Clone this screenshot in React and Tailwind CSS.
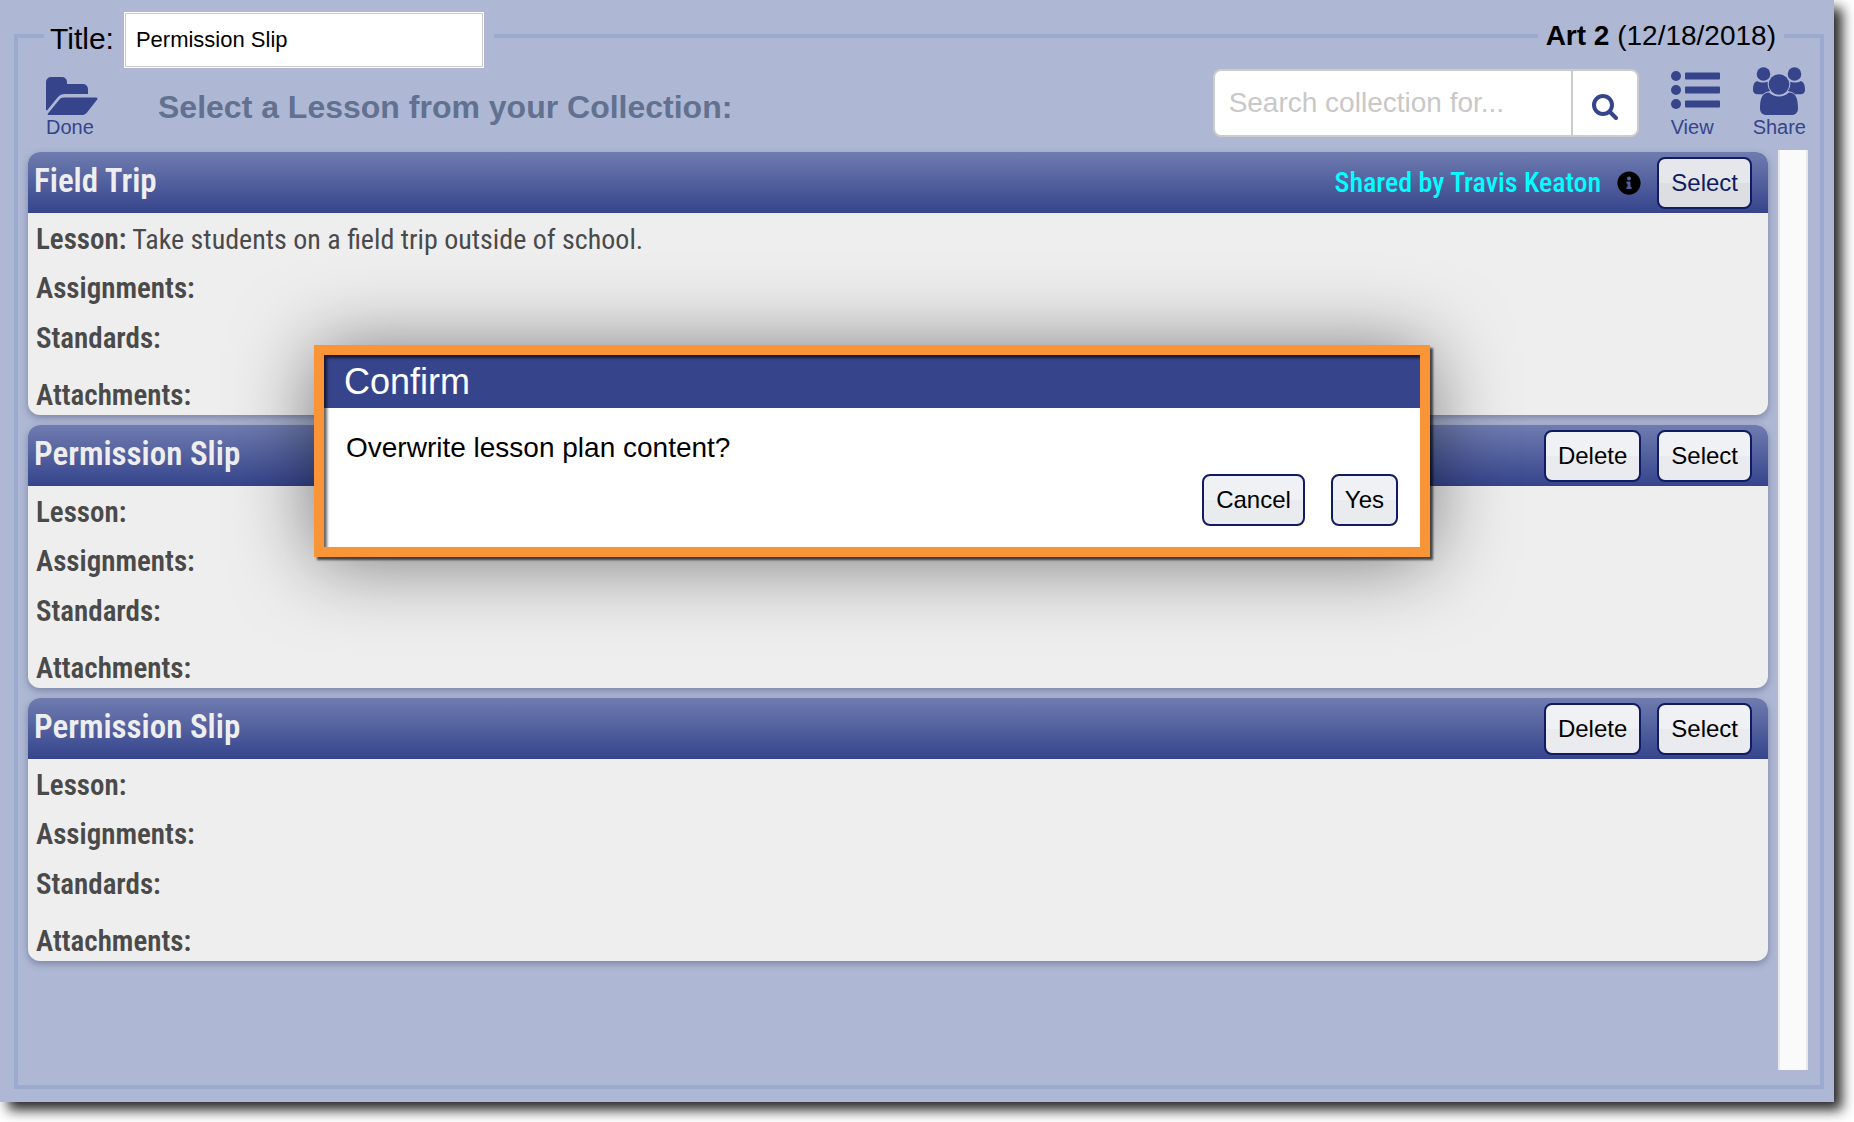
import React, { useState } from "react";
import { FaInfoCircle } from "react-icons/fa";

const lessons = [
    { id: 1, title: "Field Trip", text: "Take students on a field trip outside of school.", sharedBy: "Travis Keaton" },
    { id: 2, title: "Permission Slip", text: "" },
    { id: 3, title: "Permission Slip", text: "" },
];

function FolderOpenIcon() {
    return (
        <svg width="52" height="38" viewBox="0 0 52 38" fill="currentColor" aria-hidden="true">
            <path d="M0 33V5a5 5 0 0 1 5-5h11a5 5 0 0 1 5 5v2h16a5 5 0 0 1 5 5v5H19c-3 0-5.5 1-7.5 3.5L1 33.5z" />
            <path d="M2 36.5 13 23c1.500-1.800 2.800-2.500 5-2.500H50c1.500 0 2 1 1 2.300L41 35.500c-1.300 1.600-2.500 2.500-4.500 2.500H3c-1.300 0-1.800-.6-1-1.500z" />
        </svg>
    );
}

function ListIcon() {
    return (
        <svg width="50" height="38" viewBox="0 0 50 38" fill="currentColor" aria-hidden="true">
            {[5, 19, 33].map((y) => (
                <g key={y}>
                    <circle cx="5" cy={y} r="5" />
                    <rect x="14" y={y - 3.5} width="35" height="7" rx="1" />
                </g>
            ))}
        </svg>
    );
}

function PeopleIcon() {
    return (
        <svg width="52" height="48" viewBox="0 0 52 48" fill="currentColor" aria-hidden="true">
            <circle cx="10.5" cy="7" r="6.8" />
            <circle cx="41.5" cy="7" r="6.8" />
            <path d="M4 14c2 1 4 1.600 6.500 1.600 1.700 0 3-.3 4.300-.8a12 12 0 0 0 2.400 9.200c-3 .3-5.500 1.500-7.200 3.300H4.500C1.500 27.300 0 25.500 0 23c0-3.500.5-7.500 4-9z" />
            <path d="M48 14c-2 1-4 1.600-6.500 1.600-1.700 0-3-.3-4.300-.8a12 12 0 0 1-2.400 9.200c3 .3 5.500 1.500 7.200 3.300h5.500c3 0 4.500-1.800 4.500-4.300 0-3.500-.5-7.500-4-9z" />
            <circle cx="26" cy="17.5" r="10.3" />
            <path d="M16 25.500c2.800 2.600 6.200 3.900 10 3.900s7.200-1.300 10-3.900c7 0 9 6.500 9 16 0 4-2.500 6.500-6.500 6.500h-25C9.500 48 7 45.500 7 41.500c0-9.500 2-16 9-16z" />
        </svg>
    );
}

function SearchIcon() {
    return (
        <svg width="26" height="26" viewBox="0 0 26 26" fill="none" stroke="currentColor" strokeWidth="4" strokeLinecap="round" aria-hidden="true">
            <circle cx="11" cy="11" r="9" />
            <path d="M18 18l6 6" />
        </svg>
    );
}

function ToolButton({ icon, label }) {
    return (
        <button type="button" className="flex flex-col items-start justify-end text-xl leading-6 text-[#36448c]">
            {icon}
            {label}
        </button>
    );
}

function ActionButton({ children, active, onClick }) {
    return (
        <button
            type="button"
            onClick={onClick}
            className={
                "h-[52px] rounded-lg border-2 border-[#111b63] px-3 font-['Liberation_Sans',Arial,sans-serif] text-2xl " +
                (active
                    ? "bg-linear-to-b from-[#e6e7ea] from-50% to-[#dcdee2] to-50% text-[#111b63]"
                    : "bg-linear-to-b from-[#f0f1f4] from-50% to-[#eaebee] to-50% text-black")
            }
        >
            {children}
        </button>
    );
}

function LessonCard({ lesson }) {
    return (
        <article className="rounded-xl bg-[#eeeeee] font-['Roboto_Condensed','Liberation_Sans_Narrow',Roboto,sans-serif] text-[28px] leading-9 text-[#4a4a4a] shadow-[0_3px_7px_rgba(50,60,100,0.4)]">
            <header className="flex h-[61px] items-center gap-4 rounded-t-xl bg-linear-to-b from-[#707cb0] to-[#36448c] pr-4 pl-[6px]">
                <h2 className="flex-1 pb-1 text-[33px] font-semibold text-[#eeeeee]">{lesson.title}</h2>
                {lesson.sharedBy ? (
                    <>
                        <span className="font-medium text-[#00ffff]">Shared by {lesson.sharedBy}</span>
                        <FaInfoCircle className="size-6 text-black" />
                    </>
                ) : (
                    <ActionButton>Delete</ActionButton>
                )}
                <ActionButton active={Boolean(lesson.sharedBy)}>Select</ActionButton>
            </header>
            <div className="px-2 pt-2 pb-[2px]">
                <p><b className="text-[29px] font-semibold">Lesson:</b> {lesson.text}</p>
                <p className="mt-3 text-[29px] font-semibold">Assignments:</p>
                <p className="mt-[14px] text-[29px] font-semibold">Standards:</p>
                <p className="mt-[21px] text-[29px] font-semibold">Attachments:</p>
            </div>
        </article>
    );
}

function ConfirmDialog({ onClose }) {
    return (
        <div
            role="dialog"
            aria-labelledby="confirm-title"
            className="absolute top-[345px] left-[314px] w-[1116px] border-10 border-[#fa9537] bg-white shadow-[3px_3px_2px_rgba(0,0,0,0.65),0_4px_80px_rgba(0,0,0,0.5)]"
        >
            <div className="shadow-[inset_3px_3px_3px_rgba(0,0,0,0.6)]">
                <h2 id="confirm-title" className="bg-[#36448c] px-5 text-4xl leading-[53px] text-white shadow-[inset_3px_3px_3px_rgba(0,0,0,0.6)]">
                    Confirm
                </h2>
                <div className="px-[22px] pt-5 pb-[21px]">
                    <p className="text-[28px] leading-10">Overwrite lesson plan content?</p>
                    <div className="mt-[6px] flex justify-end gap-[26px]">
                        <ActionButton onClick={onClose}>Cancel</ActionButton>
                        <ActionButton onClick={onClose}>Yes</ActionButton>
                    </div>
                </div>
            </div>
        </div>
    );
}

function App() {
    const [title, setTitle] = useState("Permission Slip");
    const [search, setSearch] = useState("");
    const [confirmOpen, setConfirmOpen] = useState(true);

    return (
        <div className="flex min-h-screen flex-col bg-white pr-5 pb-5 font-['Liberation_Sans',Arial,sans-serif] text-black">
            <main className="relative flex flex-1 flex-col bg-[#aeb8d4] pt-1 pr-[10px] pb-[13px] pl-[14px] shadow-[8px_8px_12px_rgba(0,0,0,0.85)]">
                <fieldset className="relative min-w-0 flex-1 border-4 border-[#9daad0] pr-3 pb-[15px] pl-[10px]">
                    <legend className="ml-4 flex h-16 items-center gap-[10px] pt-2 pr-[10px] pl-[6px] text-[30px]">
                        <label htmlFor="lesson-title" className="pb-1">Title:</label>
                        <input
                            id="lesson-title"
                            value={title}
                            onChange={(e) => setTitle(e.target.value)}
                            className="h-14 w-[360px] border-2 border-[#cccccc] bg-white px-[10px] text-[22px] outline-1 -outline-offset-1 outline-white"
                        />
                    </legend>
                    {/* class name and date sit on the frame line */}
                    <div className="absolute -top-12 right-9 bg-[#aeb8d4] px-2 text-[28px] leading-8">
                        <b>Art 2</b> (12/18/2018)
                    </div>

                    <div className="flex h-[82px] items-start gap-8 pr-[2px]">
                        <div className="ml-[18px] flex h-[71px] items-end">
                            <ToolButton icon={<FolderOpenIcon />} label="Done" />
                        </div>
                        <h1 className="ml-7 flex-1 pt-5 text-[32px] leading-[38px] font-bold text-[#61718f]">
                            Select a Lesson from your Collection:
                        </h1>
                        <div className="mt-[1px] flex h-[68px] w-[426px] overflow-hidden rounded-lg border-2 border-[#cccccc] bg-white">
                            <input
                                aria-label="Search collection"
                                placeholder="Search collection for..."
                                value={search}
                                onChange={(e) => setSearch(e.target.value)}
                                className="min-w-0 flex-1 px-[14px] text-[28px] outline-none placeholder:text-[#c8c8c8]"
                            />
                            <button type="button" aria-label="Search" className="flex w-[66px] items-center justify-center border-l-2 border-[#cccccc] pt-2 text-[#36448c]">
                                <SearchIcon />
                            </button>
                        </div>
                        <div className="flex h-[71px] items-end gap-8">
                            <ToolButton icon={<span className="pb-[6px]"><ListIcon /></span>} label="View" />
                            <ToolButton icon={<PeopleIcon />} label="Share" />
                        </div>
                    </div>

                    <div className="flex min-h-[920px] gap-[10px]">
                        <section className="flex flex-1 flex-col gap-[10px] pt-[2px]">
                            {lessons.map((lesson) => (
                                <LessonCard key={lesson.id} lesson={lesson} />
                            ))}
                        </section>
                        <div className="w-[30px] border-x-2 border-[#e8e8e8] bg-[#fafafa]"></div>
                    </div>
                </fieldset>

                {confirmOpen && <ConfirmDialog onClose={() => setConfirmOpen(false)} />}
            </main>
        </div>
    );
}

export default App;
